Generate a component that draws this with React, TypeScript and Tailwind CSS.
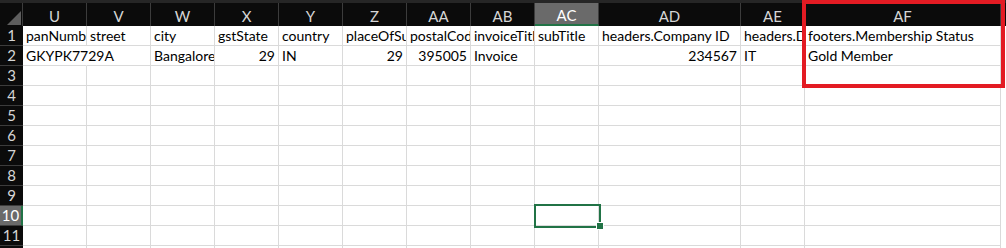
import React from "react";

type Col = { name: string; width: string };

const columns: Col[] = [
  { name: "U", width: "w-[64px]" },
  { name: "V", width: "w-[64px]" },
  { name: "W", width: "w-[64px]" },
  { name: "X", width: "w-[64px]" },
  { name: "Y", width: "w-[64px]" },
  { name: "Z", width: "w-[64px]" },
  { name: "AA", width: "w-[64px]" },
  { name: "AB", width: "w-[64px]" },
  { name: "AC", width: "w-[64px]" },
  { name: "AD", width: "w-[142px]" },
  { name: "AE", width: "w-[64px]" },
  { name: "AF", width: "w-[196px]" },
];

// spill: text runs on into the empty cell to its right
type Cell = { text: string; num?: boolean; spill?: boolean; under?: boolean };

const data: Record<number, Cell[]> = {
  1: [
    { text: "panNumber" },
    { text: "street" },
    { text: "city" },
    { text: "gstState" },
    { text: "country" },
    { text: "placeOfSupply" },
    { text: "postalCode" },
    { text: "invoiceTitle" },
    { text: "subTitle" },
    { text: "headers.Company ID" },
    { text: "headers.Department" },
    { text: "footers.Membership Status" },
  ],
  2: [
    { text: "GKYPK7729A", spill: true },
    { text: "", under: true },
    { text: "Bangalore" },
    { text: "29", num: true },
    { text: "IN" },
    { text: "29", num: true },
    { text: "395005", num: true },
    { text: "Invoice" },
    { text: "" },
    { text: "234567", num: true },
    { text: "IT" },
    { text: "Gold Member" },
  ],
};

const rows = [1, 2, 3, 4, 5, 6, 7, 8, 9, 10, 11, 12];
const activeCol = "AC";
const activeRow = 10;

function ColumnHeader({ col }: { col: Col }) {
  const active = col.name === activeCol;
  return (
    <div
      className={`${col.width} h-full shrink-0 flex items-center justify-center border-r border-[#3c3c3c] text-[15px] leading-none pt-[3px] ${
        active
          ? "bg-[#6a6a6a] text-white border-b-2 border-b-[#217346]"
          : "bg-[#0b0b0b] text-[#d6d6d6]"
      }`}
    >
      {col.name}
    </div>
  );
}

function DataRow({ row }: { row: number }) {
  const cells = data[row] ?? [];
  const active = row === activeRow;
  return (
    <div className="flex h-[20px] shrink-0">
      <div
        className={`w-[23px] shrink-0 flex items-center justify-center border-b border-[#3c3c3c] text-[15px] leading-none ${
          active
            ? "bg-[#6a6a6a] text-white border-r-2 border-r-[#217346]"
            : "bg-[#0b0b0b] text-[#d6d6d6]"
        }`}
      >
        {row}
      </div>
      {columns.map((col, i) => {
        const cell = cells[i];
        const selected = active && col.name === activeCol;
        return (
          <div
            key={col.name}
            className={`${col.width} relative shrink-0 border-b border-[#dadada] ${
              cell?.spill ? "border-r border-r-transparent z-10" : "border-r"
            }`}
          >
            <div
              className={`h-full whitespace-nowrap leading-[19px] text-[14px] text-black ${
                cell?.spill ? "overflow-visible" : "overflow-hidden"
              } ${cell?.num ? "text-right pr-[3px]" : "pl-[3px]"}`}
            >
              {cell?.text}
            </div>
            {selected && (
              <>
                <div className="absolute z-20 left-[-1px] top-[-2px] w-[67px] h-[24px] border-2 border-[#217346]" />
                <div className="absolute z-20 left-[61px] top-[16px] w-[8px] h-[8px] bg-[#217346] border border-white" />
              </>
            )}
          </div>
        );
      })}
      <div className="flex-1 bg-white" />
    </div>
  );
}

export default function App() {
  return (
    <div
      className="relative w-[1006px] h-[248px] overflow-hidden bg-white"
      style={{ fontFamily: "Lato, 'Liberation Sans', sans-serif" }}
    >
      <div className="h-[3px] bg-[#262626]" />
      <div className="flex h-[23px]">
        <div className="relative w-[23px] shrink-0 bg-[#0b0b0b] border-r border-[#3c3c3c]">
          <svg className="absolute left-[7px] top-[8px]" width="14" height="14" viewBox="0 0 14 14">
            <polygon points="0,14 14,14 14,0" fill="#5e5e5e" />
          </svg>
        </div>
        {columns.map((col) => (
          <ColumnHeader key={col.name} col={col} />
        ))}
        <div className="flex-1 bg-[#0b0b0b]" />
      </div>
      {rows.map((r) => (
        <DataRow key={r} row={r} />
      ))}

      {/* highlight around the footers column */}
      <div className="absolute z-30 left-[802px] top-0 w-[203px] h-[88px] border-4 border-[#e31b23]" />
    </div>
  );
}
